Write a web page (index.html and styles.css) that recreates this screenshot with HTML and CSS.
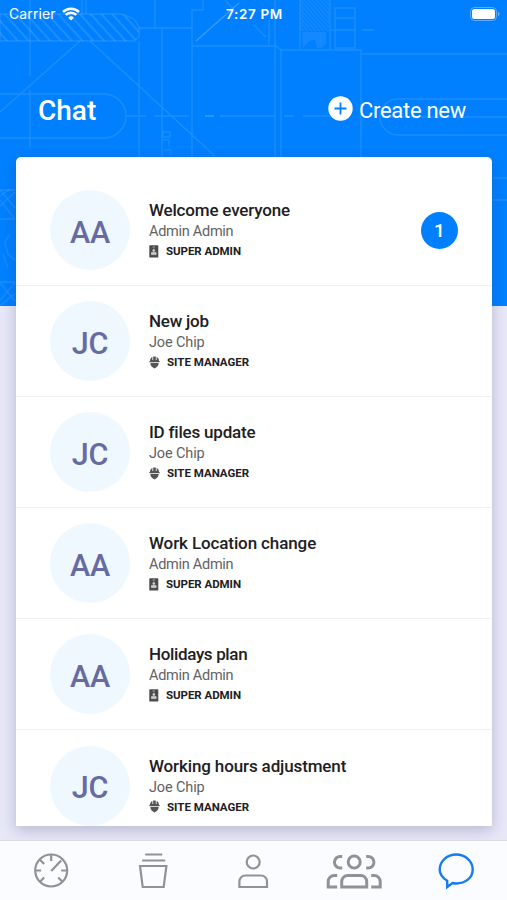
FILE: index.html
```html
<!DOCTYPE html>
<html lang="en">
<head>
<meta charset="utf-8">
<title>Chat</title>
<link rel="stylesheet" href="styles.css">
</head>
<body>
<svg class="defs" aria-hidden="true">
  <symbol id="badge" viewBox="0 0 10 13"><rect x=".3" y=".3" width="9" height="12.2" rx=".6" fill="#4b4b4b"/><path d="M3.700 2h2.200M2.500 9.600V7.600h4.600v2zM4.800 3.700v1.200" stroke="#ccc" fill="#ccc" stroke-width=".8"/><circle cx="4.800" cy="5.600" r="1.300" fill="#ccc"/></symbol>
  <symbol id="helmet" viewBox="0 0 11 13"><path d="M1 5C1 3 2 1.600 3.400 1.100V4h.8V.6h2.600V4h.8V1.100C9 1.600 10 3 10 5l.7.3v1H.3v-1zM1.400 7h8.200c0 2-.9 3.500-2.200 4.300L5.500 12.600 3.600 11.300C2.300 10.500 1.400 9 1.400 7z" fill="#555"/></symbol>
</svg>
<div class="screen">
  <header class="hero">
    <svg class="blueprint" viewBox="0 0 507 306" fill="none" stroke="#fff" stroke-opacity=".11" stroke-width="1.3">
      <defs><pattern id="hatch" width="8" height="8" patternUnits="userSpaceOnUse" patternTransform="rotate(-42)"><path d="M2 0v8" stroke="#fff" stroke-opacity=".17" stroke-width="1.300"/></pattern>
      <pattern id="fine" width="3" height="3" patternUnits="userSpaceOnUse" patternTransform="rotate(-42)"><path d="M1 0v3" stroke="#fff" stroke-opacity=".13" stroke-width="1"/></pattern></defs>
      <path d="M0 14h122l12 5 5 8v10l-5 4H0z" fill="url(#hatch)"/>
      <path d="M30 0v76M30 90v58M0 94h104a22 22 0 0 1 0 44H0M0 112L80 41M90 41l125 115M139 28h53M139 41v116M155 0v28M162 29v128M192 157V10h11V0M192 46h84l5 4v107M275 0v157M126 116h20M154 116h35M220 116h55M284 116h10M303 116h33M254 25l12 12M225 0l13 14M281 50h80v107M362 54h145M269 44V20M300 0v49M330 0v49M335 8h20v40h-20zM335 18h20M335 30h20M331 30h22M362 30h12M507 99H398a18 18 0 0 0 0 36h109M382 117h125M0 190h15M0 219h15M0 282h15M493 178h14M493 200h14M82 0v14M86 0v14"/>
      <path d="M196 41l43-38M205 116h9" stroke-opacity=".22"/>
      <path d="M163 132h7v5h-7zM163 140h6v6M164 150h7v5" stroke-opacity=".09"/>
      <path d="M300 0h29v31h-29z" fill="url(#fine)" stroke="none"/>
      <path d="M302 32h24v12l-5 4h-4l-2-8-6 1-6 7z" fill="#fff" fill-opacity=".07" stroke="none"/>
      <path d="M0 206l15-14M0 196l10-7M0 190l15 18M0 200l14 18M10 234l-5 8 3 12 7 6M0 300l15-17M0 283l15 18M3 254l5 14M0 306l14-12" stroke-opacity=".1"/>
    </svg>
    <div class="status">
      <span class="carrier">Carrier <svg width="18" height="14" viewBox="0 0 18 14"><path d="M9 13.500 6.200 10.700a4 4 0 0 1 5.600 0z" fill="#fff"/><path d="M3.700 7.900a7.500 7.500 0 0 1 10.600 0M1 5a11.500 11.500 0 0 1 16 0" fill="none" stroke="#fff" stroke-width="2.500"/></svg></span>
      <span class="time">7:27 PM</span>
      <svg class="battery" width="30" height="14" viewBox="0 0 30 14"><rect x=".5" y=".5" width="26" height="13" rx="4" fill="none" stroke="#fff" stroke-opacity=".35"/><rect x="2" y="2" width="23" height="10" rx="2.500" fill="#fff"/><path d="M28 5c2 .5 2 3.500 0 4z" fill="#fff" fill-opacity=".4"/></svg>
    </div>
    <div class="heading">
      <h1>Chat</h1>
      <div class="create"><svg width="25" height="25" viewBox="0 0 25 25"><circle cx="12.500" cy="12.500" r="12.200" fill="#fff"/><path d="M12.500 6.500v12M6.500 12.500h12" stroke="#0080ff" stroke-width="1.800"/></svg><span>Create new</span></div>
    </div>
  </header>
  <main class="card">
    <article class="row"><div class="avatar">AA</div><div class="info"><h2 class="w1">Welcome everyone</h2><p class="admin">Admin Admin</p><div class="role"><svg width="10" height="13"><use href="#badge"/></svg><span class="super">SUPER ADMIN</span></div></div><span class="count">1</span></article>
    <article class="row"><div class="avatar">JC</div><div class="info"><h2 class="w2">New job</h2><p class="joe">Joe Chip</p><div class="role"><svg width="11" height="13"><use href="#helmet"/></svg><span>SITE MANAGER</span></div></div></article>
    <article class="row"><div class="avatar">JC</div><div class="info"><h2 class="w3">ID files update</h2><p class="joe">Joe Chip</p><div class="role"><svg width="11" height="13"><use href="#helmet"/></svg><span>SITE MANAGER</span></div></div></article>
    <article class="row"><div class="avatar">AA</div><div class="info"><h2 class="w4">Work Location change</h2><p class="admin">Admin Admin</p><div class="role"><svg width="10" height="13"><use href="#badge"/></svg><span class="super">SUPER ADMIN</span></div></div></article>
    <article class="row"><div class="avatar">AA</div><div class="info"><h2 class="w5">Holidays plan</h2><p class="admin">Admin Admin</p><div class="role"><svg width="10" height="13"><use href="#badge"/></svg><span class="super">SUPER ADMIN</span></div></div></article>
    <article class="row"><div class="avatar">JC</div><div class="info"><h2 class="w6">Working hours adjustment</h2><p class="joe">Joe Chip</p><div class="role"><svg width="11" height="13"><use href="#helmet"/></svg><span>SITE MANAGER</span></div></div></article>
  </main>
  <nav class="tabs">
    <svg viewBox="0 0 101 60"><circle cx="51" cy="29.500" r="16"/><path d="M51 30 61 19.500M51 14v6M35 29.500h6M61 29.500h6M40 19l4 4M40 40.500l4-4M62 40.500l-4-4"/></svg>
    <svg viewBox="0 0 101 60"><path d="M44 13.500h17M41 19.500h23M38.800 25h26.400l-2.700 21h-21z"/></svg>
    <svg viewBox="0 0 101 60"><circle cx="50" cy="21" r="6.500"/><path d="M36.200 46v-5.500a6 6 0 0 1 6-6h15.600a6 6 0 0 1 6 6V46z"/></svg>
    <svg class="group" viewBox="0 0 101 60"><circle cx="50" cy="21" r="6"/><path d="M37.500 46v-5.500a6 6 0 0 1 6-6h13a6 6 0 0 1 6 6V46zM38 15.500h-2a5.700 5.700 0 0 0 0 11.500h2M62 15.500h2A5.700 5.700 0 0 1 64 27h-2M33 34.500h-3a6 6 0 0 0-6 6V46h9M67 34.500h3a6 6 0 0 1 6 6V46h-9"/></svg>
    <svg class="active" viewBox="0 0 101 60"><path d="M41 46v-6.200C36.500 37 33.500 33 33.500 28.500 33.500 20 41 13.500 50 13.500S66.500 20 66.500 28.500 59 42.500 50 42.500q-2 0-3.700-.5z"/></svg>
  </nav>
</div>
</body>
</html>
```
FILE: styles.css
```css
* { box-sizing: border-box; }
body { margin: 0; font-family: Roboto, "Liberation Sans", sans-serif; background: #e7e7f8; }
h1, h2, p { margin: 0; }
.defs { position: absolute; width: 0; height: 0; }
.screen { height: 900px; overflow: hidden; display: flex; flex-direction: column; }
.hero { position: relative; height: 306px; flex: none; background: #0080ff; color: #fff; }
.blueprint { position: absolute; inset: 0; width: 507px; height: 306px; }
.status { position: relative; height: 27px; display: grid; grid-template-columns: 1fr auto 1fr; align-items: center; padding: 0 7px 0 9px; font: 14px Inter, sans-serif; }
.carrier { display: flex; align-items: center; gap: 6px; letter-spacing: .1px; }
.time { font-weight: 600; font-size: 13.500px; letter-spacing: .65px; }
.battery { justify-self: end; }
.heading { position: relative; display: flex; justify-content: space-between; align-items: center; height: 40px; margin: 63px 41px 0 38px; }
h1 { font-size: 28px; font-weight: 500; }
.create { display: flex; align-items: center; gap: 6px; font-size: 22px; letter-spacing: -.28px; }
.create svg { margin-top: -3px; }
.card { position: relative; flex: none; margin: -149px 15px 0 16px; height: 669px; padding-top: 18px; overflow: hidden; background: #fff; border-radius: 5px 5px 1px 1px; box-shadow: 0 4px 14px rgba(50,50,100,.27); }
.row { height: 111.100px; display: flex; align-items: center; padding: 0 34px; border-bottom: 1px solid #f1f2f4; }
.avatar { flex: none; width: 80px; height: 80px; border-radius: 50%; background: #f0f8ff; color: #666ba3; font-size: 30.500px; font-weight: 500; letter-spacing: -.3px; display: grid; place-items: center; padding-top: 4px; }
.info { flex: 1; margin-left: 19px; white-space: nowrap; }
h2 { font-size: 17px; line-height: 22px; font-weight: 500; color: #202022; }
.w1 { letter-spacing: -.18px; }
.w2 { letter-spacing: -.25px; }
.w3 { letter-spacing: -.2px; }
.w4 { letter-spacing: -.11px; }
.w5 { letter-spacing: -.35px; }
.w6 { letter-spacing: -.13px; }
.info p { font-size: 14.500px; line-height: 20px; color: #626264; padding-top: 1px; margin-bottom: -1px; }
.info .admin { letter-spacing: -.28px; }
.info .joe { letter-spacing: -.14px; }
.role { display: flex; align-items: center; gap: 7px; height: 20px; font-size: 11.500px; font-weight: 700; color: #202022; }
.super { letter-spacing: -.05px; }
.count { width: 37px; height: 37px; border-radius: 50%; background: #0080ff; color: #fff; display: grid; place-items: center; font-size: 19px; font-weight: 500; padding-top: 1px; }
.tabs { position: relative; margin-top: 14px; height: 60px; flex: none; display: grid; grid-template-columns: repeat(5, 1fr); background: #fbfcff; border-top: 1px solid #d8d9e5; }
.tabs svg { width: 100%; height: 60px; fill: none; stroke: #919296; stroke-width: 2.200; }
.tabs .group { stroke-width: 3; }
.tabs .active { stroke: #147bf3; stroke-width: 2.400; }
```
